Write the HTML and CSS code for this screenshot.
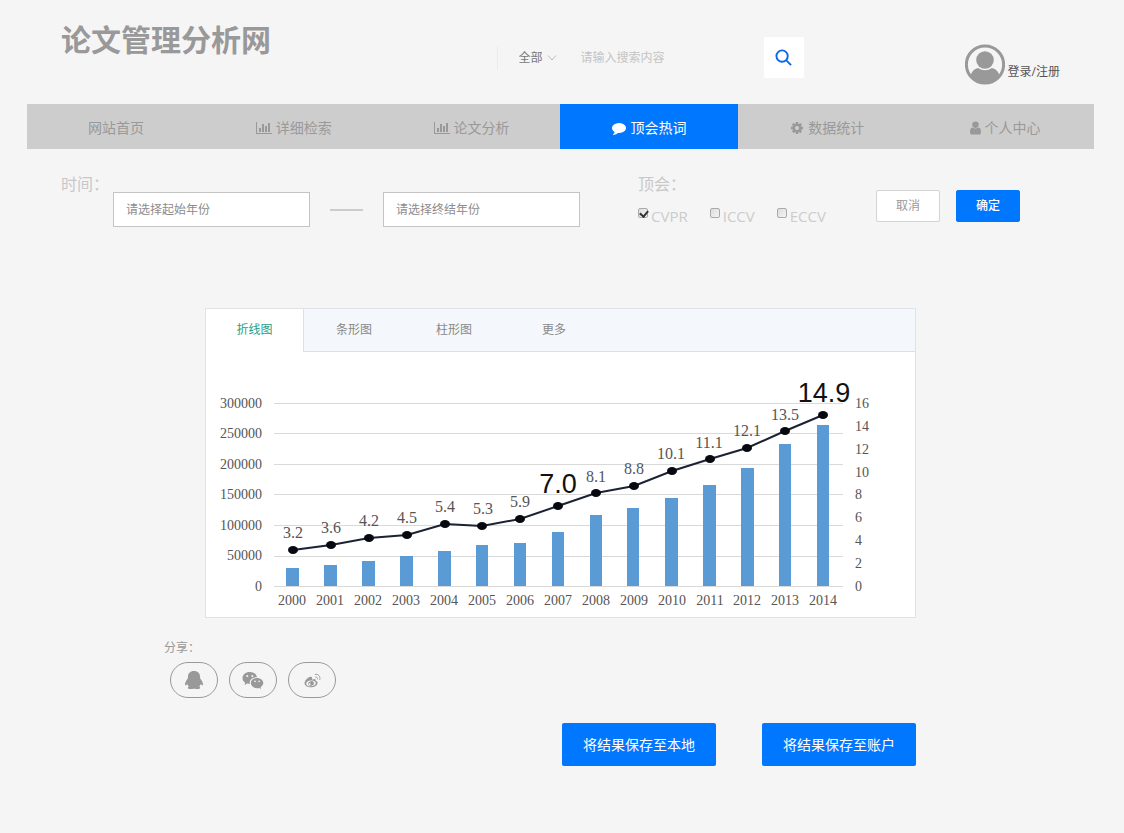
FILE: index.html
```html
<!DOCTYPE html>
<html lang="zh-CN">
<head>
<meta charset="utf-8">
<title>论文管理分析网</title>
<link rel="stylesheet" href="styles.css">
</head>
<body>
<svg class="defs" width="0" height="0" aria-hidden="true">
  <symbol id="i-bars" viewBox="0 0 16 14"><path d="M0 1h1v11h15v1H0zM3 7h2v4H3zM6 3h2v8H6zM9 5h2v6H9zM12 2h2v9h-2z"/></symbol>
  <symbol id="i-comment" viewBox="0 0 1792 1792"><path d="M1792 896q0 174-120 321.500t-326 233-450 85.500q-70 0-145-8-198 175-460 242-49 14-114 22-17 2-30.500-9t-17.500-29v-1q-3-4-.5-12t2-10 4.500-9.500l6-9 7-8.500 8-9q7-8 31-34.500t34.500-38 31-39.500 32.500-51 27-59 26-76q-157-89-247.500-220t-90.500-281q0-130 71-248.500t191-204.500 286-136.500 348-50.500q244 0 450 85.500t326 233 120 321.500z"/></symbol>
  <symbol id="i-cog" viewBox="0 0 1792 1792"><path d="M1152 896q0-106-75-181t-181-75-181 75-75 181 75 181 181 75 181-75 75-181zm512-109v222q0 12-8 23t-20 13l-185 28q-19 54-39 91 35 50 107 138 10 12 10 25t-9 23q-27 37-99 108t-94 71q-12 0-26-9l-138-108q-44 23-91 38-16 136-29 186-7 28-36 28h-222q-14 0-24.500-8.500t-11.500-21.500l-28-184q-49-16-90-37l-141 107q-10 9-25 9-14 0-25-11-126-114-165-168-7-10-7-23 0-12 8-23 15-21 51-66.500t54-70.500q-27-50-41-99l-183-27q-13-2-21-12.500t-8-23.500v-222q0-12 8-23t19-13l186-28q14-46 39-92-40-57-107-138-10-12-10-24 0-10 9-23 26-36 98.500-107.500t94.500-71.500q13 0 26 10l138 107q44-23 91-38 16-136 29-186 7-28 36-28h222q14 0 24.500 8.500t11.500 21.500l28 184q49 16 90 37l142-107q9-9 24-9 13 0 25 10 129 119 165 170 7 8 7 22 0 12-8 23-15 21-51 66.500t-54 70.500q26 50 41 98l183 28q13 2 21 12.500t8 23.500z"/></symbol>
  <symbol id="i-user" viewBox="256 128 1280 1536"><path d="M1536 1399q0 109-62.500 187t-150.500 78h-854q-88 0-150.500-78t-62.500-187q0-85 8.500-160.500t31.500-152 58.500-131 94-89 134.500-34.500q131 128 313 128t313-128q76 0 134.500 34.500t94 89 58.500 131 31.500 152 8.500 160.500zm-256-887q0 159-112.500 271.500t-271.500 112.500-271.500-112.500-112.500-271.500 112.500-271.500 271.500-112.500 271.500 112.500 112.500 271.500z"/></symbol>
</svg>

<div class="page">
  <header class="header">
    <h1 class="brand">论文管理分析网</h1>
    <form class="search">
      <div class="scope">
        <select class="scope-select" aria-label="搜索范围"><option>全部</option></select>
        <svg class="scope-arrow" viewBox="0 0 10 6" aria-hidden="true"><path d="M1 .5l4 4.500 4-4.500"/></svg>
      </div>
      <input class="search-input" type="text" placeholder="请输入搜索内容" aria-label="搜索内容">
      <button class="search-button" type="button" aria-label="搜索">
        <svg viewBox="0 0 18 18" aria-hidden="true"><circle cx="7.500" cy="7.500" r="6"/><path d="M12 12l5 5"/></svg>
      </button>
    </form>
    <a class="account" href="#">
      <svg class="avatar" viewBox="0 0 40 41" aria-hidden="true">
        <defs><clipPath id="face"><circle cx="20" cy="20.500" r="18.500"/></clipPath></defs>
        <circle class="avatar-ring" cx="20" cy="20.500" r="18.600"/>
        <g clip-path="url(#face)"><circle cx="20" cy="16" r="8.800"/><path d="M5 41V33Q7 25 13 24q7 4.500 14 0 6 1 8 9v8z"/></g>
      </svg>
      <span>登录/注册</span>
    </a>
  </header>

  <nav class="nav">
    <a class="nav-item" href="#">网站首页</a>
    <a class="nav-item" href="#"><svg class="icon-wide" aria-hidden="true"><use href="#i-bars"/></svg>详细检索</a>
    <a class="nav-item" href="#"><svg class="icon-wide" aria-hidden="true"><use href="#i-bars"/></svg>论文分析</a>
    <a class="nav-item active" href="#"><svg class="icon" aria-hidden="true"><use href="#i-comment"/></svg>顶会热词</a>
    <a class="nav-item" href="#"><svg class="icon" aria-hidden="true"><use href="#i-cog"/></svg>数据统计</a>
    <a class="nav-item" href="#"><svg class="icon-slim" aria-hidden="true"><use href="#i-user"/></svg>个人中心</a>
  </nav>

  <form class="filters">
    <label class="caption" for="year-from">时间：</label>
    <div class="range">
      <input class="year" id="year-from" type="text" placeholder="请选择起始年份">
      <span class="dash"></span>
      <input class="year" type="text" placeholder="请选择终结年份" aria-label="终结年份">
    </div>
    <div class="venues">
      <div class="caption">顶会：</div>
      <div class="checks">
        <label class="check"><input type="checkbox" checked>CVPR</label>
        <label class="check"><input type="checkbox">ICCV</label>
        <label class="check"><input type="checkbox">ECCV</label>
      </div>
    </div>
    <div class="actions">
      <button class="btn btn-plain" type="button">取消</button>
      <button class="btn btn-primary" type="button">确定</button>
    </div>
  </form>

  <main class="result">
    <section class="panel">
      <div class="tabs" role="tablist">
        <button class="tab selected" type="button" role="tab" aria-selected="true">折线图</button>
        <button class="tab" type="button" role="tab">条形图</button>
        <button class="tab" type="button" role="tab">柱形图</button>
        <button class="tab" type="button" role="tab">更多</button>
      </div>
      <svg class="chart" viewBox="206 352 709 265" role="img" aria-label="2000 至 2014 年统计图">
        <path class="grid" d="M274 403.500H843M274 433.500H843M274 464.500H843M274 494.500H843M274 525.500H843M274 556.500H843M274 586.500H843"/>
        <g class="axis left">
          <text x="262" y="408">300000</text><text x="262" y="438">250000</text><text x="262" y="469">200000</text><text x="262" y="499">150000</text><text x="262" y="530">100000</text><text x="262" y="560">50000</text><text x="262" y="591">0</text>
        </g>
        <g class="axis">
          <text x="855" y="408">16</text><text x="855" y="431">14</text><text x="855" y="454">12</text><text x="855" y="477">10</text><text x="855" y="499">8</text><text x="855" y="522">6</text><text x="855" y="545">4</text><text x="855" y="568">2</text><text x="855" y="591">0</text>
        </g>
        <g class="axis mid">
          <text x="292" y="605">2000</text><text x="330" y="605">2001</text><text x="368" y="605">2002</text><text x="406" y="605">2003</text><text x="444" y="605">2004</text><text x="482" y="605">2005</text><text x="520" y="605">2006</text><text x="558" y="605">2007</text><text x="596" y="605">2008</text><text x="634" y="605">2009</text><text x="672" y="605">2010</text><text x="710" y="605">2011</text><text x="747" y="605">2012</text><text x="785" y="605">2013</text><text x="823" y="605">2014</text>
        </g>
        <path class="bars" d="M286 568h13v18h-13zM324 565h13v21h-13zM362 561h13v25h-13zM400 556h13v30h-13zM438 551h13v35h-13zM476 545h12v41h-12zM514 543h12v43h-12zM552 532h12v54h-12zM590 515h12v71h-12zM627 508h12v78h-12zM665 498h13v88h-13zM703 485h13v101h-13zM741 468h13v118h-13zM779 444h12v142h-12zM817 425h12v161h-12z"/>
        <polyline class="trend" points="293,550 331,545 369,538 407,535 445,524 482,526 520,519 558,506 596,493 634,486 672,471 710,459 747,448 785,431 823,415"/>
        <g class="points">
          <ellipse cx="293" cy="550" rx="5" ry="4"/><ellipse cx="331" cy="545" rx="5" ry="4"/><ellipse cx="369" cy="538" rx="5" ry="4"/><ellipse cx="407" cy="535" rx="5" ry="4"/><ellipse cx="445" cy="524" rx="5" ry="4"/><ellipse cx="482" cy="526" rx="5" ry="4"/><ellipse cx="520" cy="519" rx="5" ry="4"/><ellipse cx="558" cy="506" rx="5" ry="4"/><ellipse cx="596" cy="493" rx="5" ry="4"/><ellipse cx="634" cy="486" rx="5" ry="4"/><ellipse cx="672" cy="471" rx="5" ry="4"/><ellipse cx="710" cy="459" rx="5" ry="4"/><ellipse cx="747" cy="448" rx="5" ry="4"/><ellipse cx="785" cy="431" rx="5" ry="4"/><ellipse cx="823" cy="415" rx="5" ry="4"/>
        </g>
        <g class="value">
          <text x="293" y="538">3.2</text><text x="331" y="533">3.6</text><text x="369" y="526">4.2</text><text x="407" y="523">4.5</text><text x="445" y="512">5.4</text><text x="483" y="514">5.3</text><text x="520" y="507">5.9</text><text x="596" y="482">8.1</text><text x="634" y="474">8.8</text><text x="671" y="459">10.1</text><text x="709" y="448">11.1</text><text x="747" y="436">12.1</text><text x="785" y="420">13.5</text>
        </g>
        <g class="peak"><text x="558" y="493">7.0</text><text x="824" y="402">14.9</text></g>
      </svg>
    </section>
  </main>

  <section class="share">
    <div class="share-title">分享：</div>
    <div class="share-list">
      <button class="pill" type="button" aria-label="QQ">
        <svg viewBox="0 0 20 20" aria-hidden="true"><path d="M10 1C6 1 3.900 3.500 4 6.500L3.800 8.600C2.200 10.500.7 13 1 15c.6.700 1.500 0 2.200-1 .3 1 .8 1.800 1.600 2.500-1.300.6-1.400 2.200.4 2.500 1.500.2 3.800 0 4.800-.5 1 .5 3.300.7 4.800.5 1.800-.3 1.700-1.900.4-2.500.8-.7 1.300-1.500 1.600-2.500.7 1 1.600 1.700 2.200 1 .3-2-1.200-4.500-2.800-6.400L16 6.500C16.100 3.500 14 1 10 1z"/></svg>
      </button>
      <button class="pill" type="button" aria-label="微信">
        <svg class="pill-wide" viewBox="0 0 22 18" aria-hidden="true"><path fill-rule="evenodd" d="M7.800 1C3.500 1 .5 3.700.5 7c0 2 1 3.600 2.700 4.700l-.7 2.200 2.600-1.300c1 .3 1.900.4 2.700.4C7 9 10.500 6 15 6.200 14.500 3 11.500 1 7.800 1zM5.300 4a1 1 0 110 2 1 1 0 010-2zm5 0a1 1 0 110 2 1 1 0 010-2z"/><path fill-rule="evenodd" d="M15 7c-3.600 0-6.200 2.300-6.200 5.100 0 2.900 2.600 5.100 6.200 5.100.7 0 1.400-.1 2.100-.3l2 1-.5-1.700c1.500-1 2.700-2.400 2.700-4.100C21.300 9.300 18.500 7 15 7zm-2 2.600a.8.800 0 110 1.600.8.800 0 010-1.600zm4.100 0a.8.800 0 110 1.600.8.800 0 010-1.600z"/></svg>
      </button>
      <button class="pill" type="button" aria-label="微博">
        <svg class="pill-small" viewBox="0 0 18 16" aria-hidden="true"><path fill-rule="evenodd" d="M7 4C4 4.500.5 8 .5 11c0 2.600 3.200 4.300 6.600 4.300 4.300 0 7.300-2.500 7.300-4.700 0-1.400-1.100-2-2-2.300.5-1.600-.9-2.500-3.900-1.200C9 5.200 8.500 3.800 7 4zm.3 4c3-.2 5.200 1 5.200 2.700 0 1.800-2.300 3.300-5.200 3.500-2.900.1-5-1.100-5-2.800S4.400 8.200 7.300 8z"/><path fill-rule="evenodd" d="M7.500 8.700c1.900-.3 3.400 1 3 2.700-.4 1.500-2.200 2.600-4 2.400-1.700-.2-2.600-1.700-2-3.100.5-1.100 1.700-1.800 3-2zM6 11a1 1 0 100 2.100A1 1 0 006 11z"/><path class="wave" d="M12 4.300c1.600-.3 2.600.9 2.200 2.500M11.500 1.500c3.500-.8 6.200 2 5.200 5.800"/></svg>
      </button>
    </div>
  </section>

  <div class="save">
    <button class="btn-save" type="button">将结果保存至本地</button>
    <button class="btn-save" type="button">将结果保存至账户</button>
  </div>
</div>
</body>
</html>
```
FILE: styles.css
```css
* { box-sizing: border-box; }

body {
  margin: 0;
  background: #f5f5f5;
  color: #999;
  font: 12px/18px "Open Sans", "Noto Sans CJK SC", sans-serif;
}

button, input, select { font: inherit; color: inherit; }
button { cursor: pointer; }
a { color: inherit; text-decoration: none; }
.defs { display: block; }
.page { padding: 0 30px 40px 27px; }

/* Header */
.header {
  display: flex;
  align-items: flex-start;
  padding: 0 34px 19px;
}
.brand {
  flex: 1 1 auto;
  margin: 0;
  padding-top: 19px;
  font-size: 30px;
  line-height: 42px;
  font-weight: 700;
  white-space: nowrap;
}
.search {
  display: flex;
  align-items: center;
  margin-top: 37px;
}
.scope {
  display: flex;
  align-items: center;
  border-left: 1px solid #ebebeb;
  padding-left: 21px;
}
.scope-select {
  appearance: none;
  width: 38px;
  height: 24px;
  padding: 0;
  border: 0;
  background: none;
  color: #777;
}
.scope-arrow {
  width: 10px;
  height: 6px;
  margin-left: -10px;
  fill: none;
  stroke: #bbb;
  pointer-events: none;
}
.search-input {
  width: 183px;
  height: 40px;
  margin-left: 24px;
  padding: 0;
  border: 0;
  background: none;
}
.search-input::placeholder { color: #c4c4c4; }
.search-button {
  display: grid;
  place-items: center;
  width: 40px;
  height: 41px;
  padding: 0;
  border: 0;
  border-radius: 2px;
  background: #fff;
}
.search-button svg {
  width: 17px;
  height: 17px;
  fill: none;
  stroke: #0a68e8;
  stroke-width: 2;
}
.account {
  display: flex;
  align-items: center;
  gap: 3px;
  margin: 44px 0 0 161px;
  color: #555;
  white-space: nowrap;
}
.account span { padding-top: 14px; }
.avatar { width: 40px; height: 41px; fill: #999; }
.avatar-ring { fill: none; stroke: #999; stroke-width: 3; }

/* Navigation */
.nav {
  display: grid;
  grid-template-columns: repeat(6, 1fr);
  background: #cdcdcd;
}
.nav-item {
  display: flex;
  align-items: center;
  justify-content: center;
  gap: 4px;
  height: 45px;
  padding-top: 2px;
  font-size: 14px;
  line-height: 20px;
}
.nav-item svg { fill: currentColor; height: 14px; }
.icon { width: 14px; }
.icon-wide { width: 16px; }
.icon-slim { width: 11px; }
.active { background: #07f; color: #fff; }

/* Filters */
.filters {
  display: flex;
  align-items: flex-start;
  padding: 24px 0 81px 34px;
}
.caption {
  font-size: 16px;
  line-height: 22px;
  color: #c8c8c8;
  white-space: nowrap;
}
.range {
  display: flex;
  align-items: center;
  gap: 20px;
  margin: 19px 0 0 4px;
}
.year {
  width: 197px;
  height: 35px;
  padding: 0 12px;
  border: 1px solid #c4c4c4;
  background: #fff;
}
.year::placeholder { color: #8c8c8c; }
.dash { width: 33px; height: 2px; background: #ccc; }
.venues { margin-left: 58px; }
.checks { display: flex; gap: 22px; margin-top: 10px; }
.check {
  display: flex;
  align-items: flex-start;
  gap: 3px;
  font-size: 15px;
  line-height: 22px;
  color: #ccc;
}
.check input {
  appearance: none;
  width: 10px;
  height: 10px;
  margin: 3px 0 0;
  border: 1px solid #aaa;
  border-radius: 2px;
  background: linear-gradient(135deg, #ddd, #f4f4f4);
}
.check input:checked::after {
  content: "";
  display: block;
  width: 4px;
  height: 6px;
  margin: 0 0 0 2px;
  border: solid #333;
  border-width: 0 2px 2px 0;
  transform: rotate(40deg);
}
.actions { display: flex; gap: 16px; margin: 17px 0 0 50px; }
.btn {
  width: 64px;
  height: 32px;
  padding: 0;
  border: 1px solid #d4d4d4;
  border-radius: 2px;
}
.btn-plain { background: #fff; }
.btn-primary { background: #07f; border-color: #07f; color: #fff; font-weight: 500; }

/* Chart panel */
.result { padding: 0 178px; }
.panel { border: 1px solid #dfe3e5; background: #fff; }
.tabs {
  display: flex;
  background: #f4f8fc;
  box-shadow: inset 0 -1px #dbe0e4;
}
.tab {
  width: 100px;
  height: 43px;
  padding: 0 0 2px;
  border: 0;
  background: none;
  color: #888;
}
.selected {
  width: 98px;
  background: #fff;
  border-right: 1px solid #dbe0e4;
  color: #1c9f87;
}
.chart { display: block; width: 100%; font-family: "Liberation Serif", serif; }
.grid { stroke: #d9d9d9; stroke-width: 1; }
.axis { font-size: 14px; fill: #555; }
.left { text-anchor: end; }
.mid { text-anchor: middle; }
.bars { fill: #5b9bd5; }
.trend { fill: none; stroke: #1b2233; stroke-width: 2; }
.points { fill: #080810; }
.value { font-size: 16px; fill: #555; text-anchor: middle; }
.peak { font: 27px "Liberation Sans", sans-serif; fill: #111; text-anchor: middle; }

/* Share and save */
.share { padding: 21px 137px 0; }
.share-list { display: flex; gap: 11px; padding: 5px 6px 0; }
.pill {
  display: grid;
  place-items: center;
  width: 48px;
  height: 36px;
  padding: 0;
  border: 1px solid #999;
  border-radius: 18px;
  background: none;
}
.pill svg { width: 20px; height: 20px; fill: #999; }
.pill .pill-wide { width: 22px; height: 18px; }
.pill .pill-small { width: 17px; height: 15px; }
.pill .wave { fill: none; stroke: #999; stroke-width: 1; }
.save {
  display: flex;
  justify-content: flex-end;
  gap: 46px;
  padding: 25px 178px 0;
}
.btn-save {
  width: 154px;
  height: 43px;
  padding: 0;
  border: 0;
  border-radius: 2px;
  background: #07f;
  color: #fff;
  font-size: 14px;
}
```
